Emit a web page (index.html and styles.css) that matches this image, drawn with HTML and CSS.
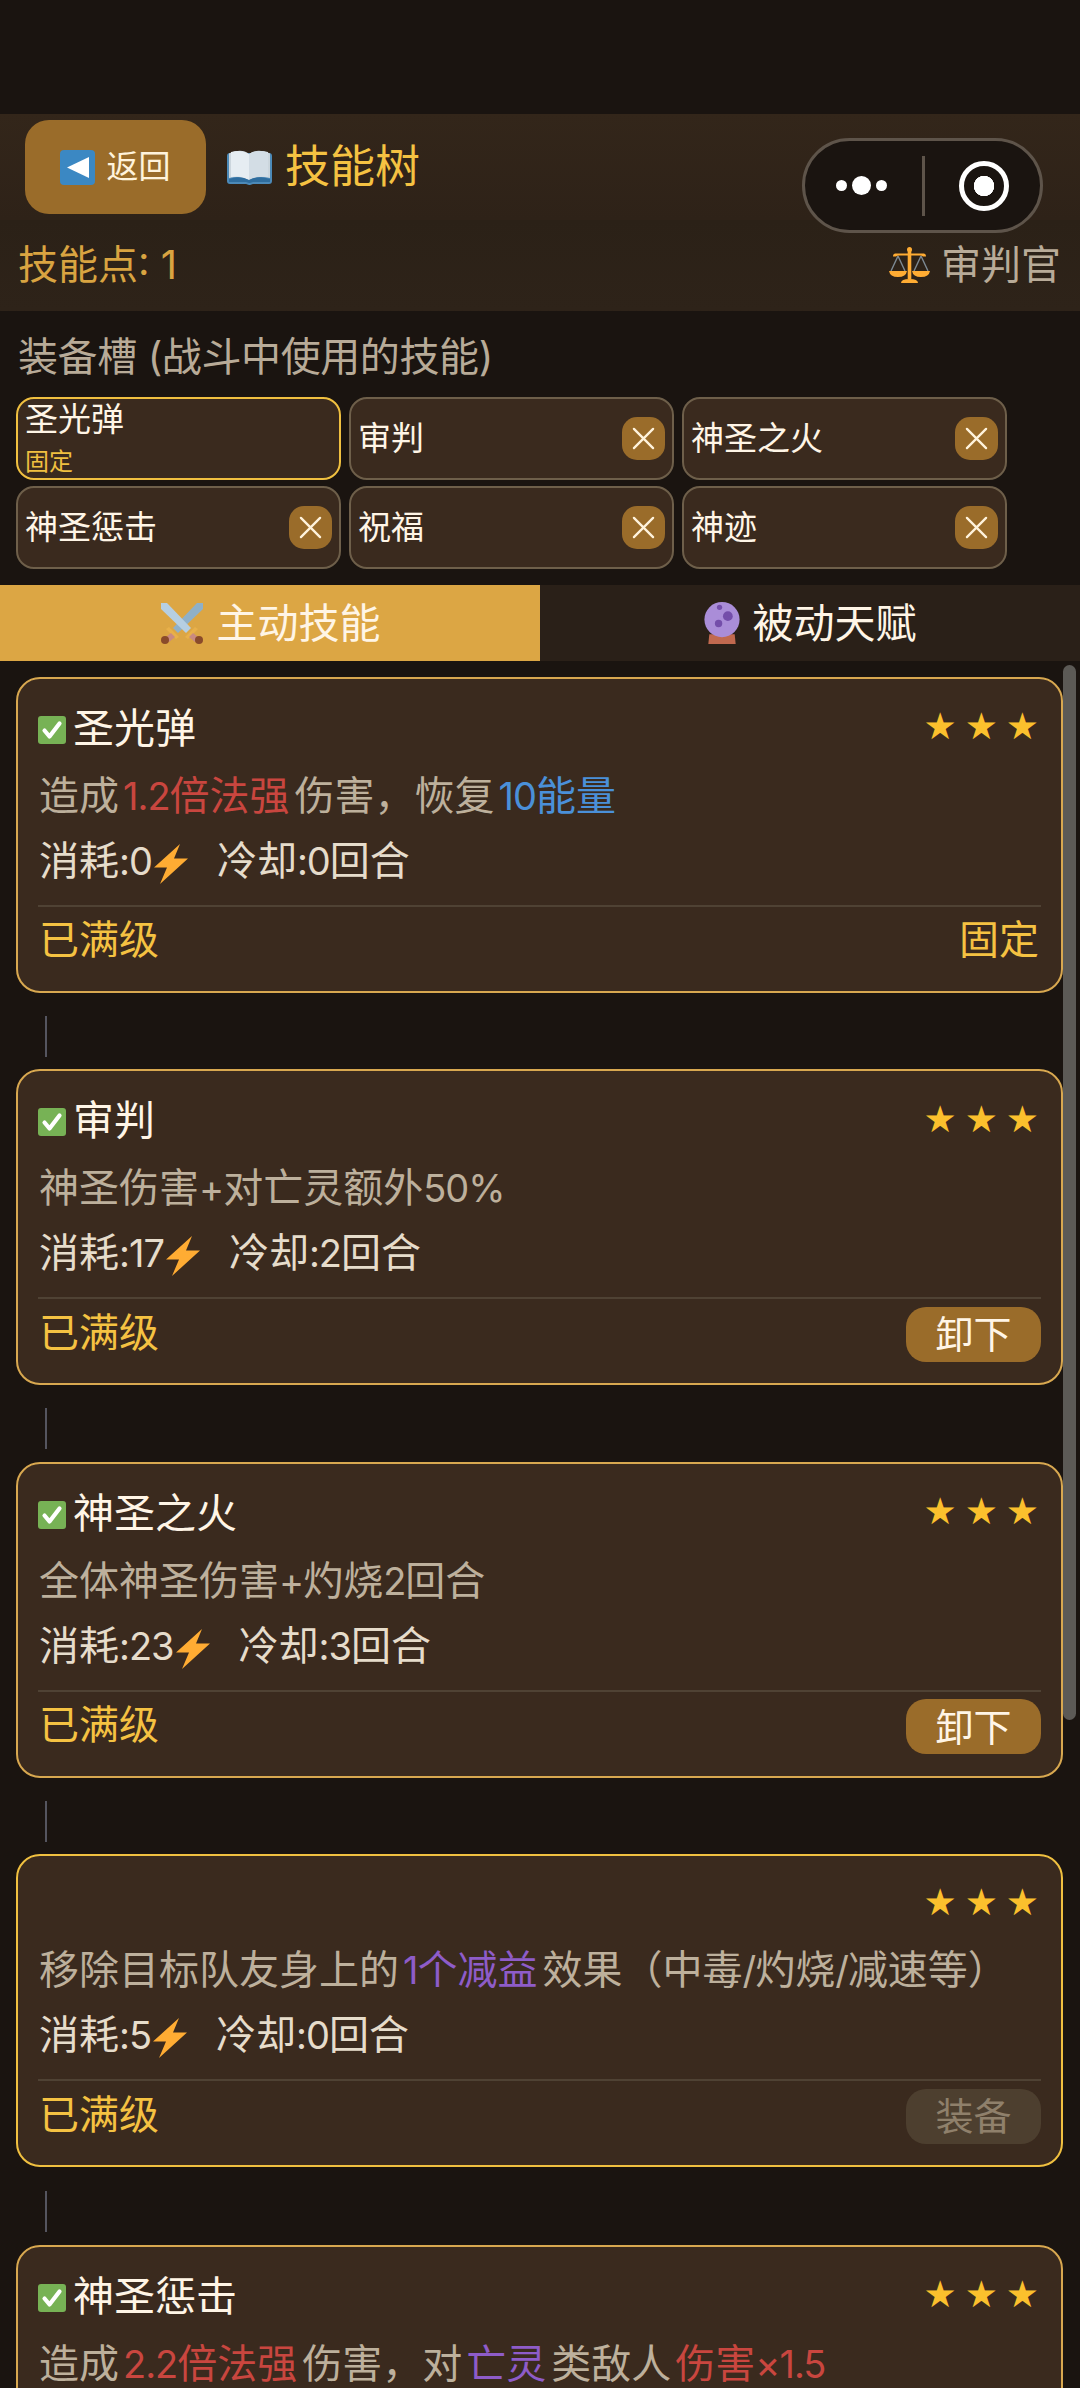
FILE: index.html
```html
<!DOCTYPE html>
<html lang="zh-CN">
<head>
<meta charset="utf-8">
<title>技能树</title>
<link rel="stylesheet" href="styles.css">
</head>
<body>
<svg class="defs" width="0" height="0" aria-hidden="true">
  <symbol id="check" viewBox="0 0 28 28">
    <rect width="28" height="28" rx="3" fill="#77b255"/>
    <path d="M6.500 14.500l5 6L21.500 7.500" fill="none" stroke="#fff" stroke-width="4.200" stroke-linecap="round" stroke-linejoin="round"/>
  </symbol>
  <symbol id="bolt" viewBox="0 0 34 40">
    <path d="M26 0L0 23.500h13L6 40 34 14.500H20z" fill="#ffac33"/>
  </symbol>
  <symbol id="x" viewBox="0 0 24 24">
    <path d="M2 2l20 20M22 2L2 22" stroke="#fff3dc" stroke-width="2.400" stroke-linecap="round"/>
  </symbol>
</svg>

<div class="status"></div>

<header class="header">
  <button class="back">
    <svg class="back-icon" viewBox="0 0 35 35"><rect width="35" height="35" rx="4" fill="#3b88c3"/><path d="M7 17.500L29 7v21z" fill="#fff"/></svg>
    <span>返回</span>
  </button>
  <svg class="book" viewBox="0 0 45 36">
    <path d="M0 7q0-3 3-3h39q3 0 3 3v25q0 3-3 3H26l-3 1h-1l-3-1H3q-3 0-3-3z" fill="#55acee" opacity=".75"/>
    <path d="M2 5q0-1 1-1 12-5 19 1 8-6 20-1 1 0 1 1v24q-12-3-21 2-9-5-20-2z" fill="#ccd6dd"/>
    <path d="M4 3q10-3 18 2v26q-8-5-18-3z" fill="#e6edf2"/>
    <path d="M41 3q-11-3-19 2v26q8-5 19-3z" fill="#d3dde5"/>
    <path d="M2 30q11-4 20 1 9-5 21-1v3H26l-3 1h-1l-3-1H2z" fill="#2f6d9e"/>
  </svg>
  <h1 class="title">技能树</h1>
</header>

<div class="capsule">
  <div class="dots"><i class="dot"></i><i class="dot big"></i><i class="dot"></i></div>
  <i class="divider"></i>
  <div class="ring"></div>
</div>

<div class="points">
  <span class="points-count">技能点: 1</span>
  <span class="role">
    <svg class="scales" viewBox="0 0 41 36">
      <path d="M9 9L2 24M9 9l7 15M32 9l-7 15M32 9l7 15" stroke="#7d8a94" stroke-width="1.400" fill="none"/>
      <path d="M0 24h18q-1 6-9 6t-9-6zM23 24h18q-1 6-9 6t-9-6z" fill="#ffac33"/>
      <rect x="18.700" y="3" width="3.600" height="29" fill="#ffac33"/>
      <circle cx="20.500" cy="2.500" r="2.500" fill="#ffac33"/>
      <path d="M6 6.500h29q2 0 2 3h-3q-1-1-3-1H10q-2 0-3 1H4q0-3 2-3z" fill="#ffac33"/>
      <path d="M12 36q0-4 8.500-4t8.500 4z" fill="#ffac33"/>
    </svg>
    <span>审判官</span>
  </span>
</div>

<section class="equip">
  <div class="equip-label">装备槽 (战斗中使用的技能)</div>
  <div class="slots">
    <div class="slot fixed"><span class="slot-name">圣光弹</span><span class="slot-sub">固定</span></div>
    <div class="slot"><span class="slot-name">审判</span><span class="slot-x"><svg class="x-icon"><use href="#x"/></svg></span></div>
    <div class="slot"><span class="slot-name">神圣之火</span><span class="slot-x"><svg class="x-icon"><use href="#x"/></svg></span></div>
    <div class="slot"><span class="slot-name">神圣惩击</span><span class="slot-x"><svg class="x-icon"><use href="#x"/></svg></span></div>
    <div class="slot"><span class="slot-name">祝福</span><span class="slot-x"><svg class="x-icon"><use href="#x"/></svg></span></div>
    <div class="slot"><span class="slot-name">神迹</span><span class="slot-x"><svg class="x-icon"><use href="#x"/></svg></span></div>
  </div>
</section>

<nav class="tabs">
  <div class="tab active">
    <svg class="tab-icon swords" viewBox="0 0 44 42">
      <path d="M37 1l6 0 0 6-25 24-5-5z" fill="#8fb0c8"/>
      <path d="M7 1L1 1l0 6 25 24 5-5z" fill="#b6cfe2"/>
      <path d="M9 25l10 10-3 2-10-10zM35 25L25 35l3 2 10-10z" fill="#e8b04a"/>
      <path d="M11 31l4 4-6 5-4-4zM33 31l-4 4 6 5 4-4z" fill="#c98a80"/>
      <circle cx="5" cy="38" r="4" fill="#8a4b2a"/>
      <circle cx="39" cy="38" r="4" fill="#8a4b2a"/>
    </svg>
    <span>主动技能</span>
  </div>
  <div class="tab">
    <svg class="tab-icon ball" viewBox="0 0 36 43">
      <path d="M4 43l1-10h26l1 10z" fill="#c1694f"/>
      <circle cx="18" cy="18" r="18" fill="#aa8dd8"/>
      <circle cx="24" cy="14.500" r="5" fill="#744eaa"/>
      <circle cx="14.500" cy="22" r="3.800" fill="#744eaa"/>
      <circle cx="15.500" cy="5.500" r="2.700" fill="#744eaa"/>
    </svg>
    <span>被动天赋</span>
  </div>
</nav>

<main class="list">
  <article class="card">
    <div class="card-top">
      <div class="card-name"><svg class="check"><use href="#check"/></svg><span>圣光弹</span></div>
      <div class="stars">★★★</div>
    </div>
    <p class="desc">造成<span class="hl red"><span class="num">1.2</span>倍法强</span>伤害，恢复<span class="hl blue"><span class="num">10</span>能量</span></p>
    <p class="stats"><span class="stat">消耗<span class="num">:0</span><svg class="bolt"><use href="#bolt"/></svg></span><span>冷却<span class="num">:0</span>回合</span></p>
    <div class="card-foot"><span class="level">已满级</span><span class="level">固定</span></div>
  </article>
  <div class="link"></div>
  <article class="card">
    <div class="card-top">
      <div class="card-name"><svg class="check"><use href="#check"/></svg><span>审判</span></div>
      <div class="stars">★★★</div>
    </div>
    <p class="desc">神圣伤害<span class="num">+</span>对亡灵额外<span class="num">50%</span></p>
    <p class="stats"><span class="stat">消耗<span class="num">:17</span><svg class="bolt"><use href="#bolt"/></svg></span><span>冷却<span class="num">:2</span>回合</span></p>
    <div class="card-foot"><span class="level">已满级</span><button class="action">卸下</button></div>
  </article>
  <div class="link"></div>
  <article class="card">
    <div class="card-top">
      <div class="card-name"><svg class="check"><use href="#check"/></svg><span>神圣之火</span></div>
      <div class="stars">★★★</div>
    </div>
    <p class="desc">全体神圣伤害<span class="num">+</span>灼烧<span class="num">2</span>回合</p>
    <p class="stats"><span class="stat">消耗<span class="num">:23</span><svg class="bolt"><use href="#bolt"/></svg></span><span>冷却<span class="num">:3</span>回合</span></p>
    <div class="card-foot"><span class="level">已满级</span><button class="action">卸下</button></div>
  </article>
  <div class="link"></div>
  <article class="card bright">
    <div class="card-top short">
      <div class="card-name"></div>
      <div class="stars">★★★</div>
    </div>
    <p class="desc">移除目标队友身上的<span class="hl purple"><span class="num">1</span>个减益</span>效果（中毒<span class="num">/</span>灼烧<span class="num">/</span>减速等）</p>
    <p class="stats"><span class="stat">消耗<span class="num">:5</span><svg class="bolt"><use href="#bolt"/></svg></span><span>冷却<span class="num">:0</span>回合</span></p>
    <div class="card-foot"><span class="level">已满级</span><button class="action off">装备</button></div>
  </article>
  <div class="link"></div>
  <article class="card">
    <div class="card-top">
      <div class="card-name"><svg class="check"><use href="#check"/></svg><span>神圣惩击</span></div>
      <div class="stars">★★★</div>
    </div>
    <p class="desc">造成<span class="hl red"><span class="num">2.2</span>倍法强</span>伤害，对<span class="hl purple">亡灵</span>类敌人<span class="hl red">伤害<span class="num">×1.5</span></span></p>
  </article>
</main>

<div class="scrollbar"></div>
</body>
</html>
```

FILE: styles.css
```css
* { box-sizing: border-box; }

html, body {
  margin: 0;
  height: 2388px;
  overflow: hidden;
}

body {
  position: relative;
  background: #1a1410;
  color: #fff5e6;
  font-family: Inter, "Noto Sans CJK SC", sans-serif;
}

.defs { position: absolute; }

.status { height: 114px; }

.header {
  display: flex;
  align-items: center;
  height: 106px;
  padding-left: 25px;
  background: linear-gradient(#33261a, #2e2218);
}

.back {
  display: flex;
  align-items: center;
  justify-content: center;
  gap: 11px;
  width: 181px;
  height: 94px;
  padding: 0;
  border: 0;
  border-radius: 24px;
  background: #9a6c2a;
  color: #fff3dc;
  font: inherit;
  font-size: 32px;
  line-height: 46px;
}

.back-icon { width: 35px; height: 35px; }

.book { width: 45px; height: 36px; margin-left: 21px; }

.title {
  margin: 0 0 1px 13px;
  font-size: 45px;
  font-weight: 400;
  line-height: 60px;
  color: #f5c242;
}

.capsule {
  position: absolute;
  top: 138px;
  left: 802px;
  width: 241px;
  height: 95px;
  display: flex;
  align-items: center;
  border: 3px solid #5e544a;
  border-radius: 48px;
  background: #1a1410;
}

.dots {
  display: flex;
  align-items: center;
  gap: 5px;
  width: 86px;
  margin-left: 31px;
}

.dot { width: 11px; height: 11px; border-radius: 50%; background: #fff; }
.dot.big { width: 19px; height: 19px; }

.divider { width: 3px; height: 60px; background: #5e544a; }

.ring {
  width: 50px;
  height: 50px;
  margin-left: 34px;
  border: 5px solid #fff;
  border-radius: 50%;
  background: radial-gradient(circle, #fff 0 10px, transparent 10.5px);
}

.points {
  display: flex;
  align-items: center;
  justify-content: space-between;
  height: 91px;
  padding: 0 19px 2px 18px;
  background: linear-gradient(#2b2117, #2e2319);
  font-size: 40px;
  line-height: 56px;
}

.points-count { color: #d9a441; }

.role { display: flex; align-items: center; gap: 11px; color: #b8ab98; }

.scales { width: 41px; height: 36px; }

.equip { padding: 24px 0 16px 16px; }

.equip-label {
  padding-left: 2px;
  font-size: 40px;
  line-height: 44px;
  letter-spacing: -0.4px;
  color: #b8ab98;
}

.slots {
  display: grid;
  grid-template-columns: repeat(3, 325px);
  grid-auto-rows: 83px;
  gap: 6px 8px;
  margin-top: 18px;
}

.slot {
  display: flex;
  align-items: center;
  justify-content: space-between;
  padding: 0 7px;
  border: 2px solid #6e5f4a;
  border-radius: 18px;
  background: #3a2a1e;
}

.slot.fixed {
  flex-direction: column;
  align-items: flex-start;
  justify-content: flex-start;
  border-color: #f0c040;
}

.slot-name { margin-bottom: 2px; font-size: 33px; line-height: 40px; }

.slot-sub {
  margin-top: 6px;
  font-size: 24px;
  line-height: 30px;
  color: #f0c040;
}

.slot-x {
  display: flex;
  align-items: center;
  justify-content: center;
  width: 43px;
  height: 43px;
  border-radius: 15px;
  background: #9a6c2a;
}

.x-icon { width: 23px; height: 23px; }

.tabs {
  display: grid;
  grid-template-columns: 1fr 1fr;
  height: 76px;
  background: #2a2018;
}

.tab {
  display: flex;
  align-items: center;
  justify-content: center;
  gap: 13px;
  font-size: 41px;
  line-height: 58px;
}

.tab.active { background: #dca644; }

.tab-icon { width: 44px; height: 42px; }
.tab-icon.ball { width: 36px; }

.list { padding: 15.6px 17px 0 16px; }

.card {
  height: 316px;
  padding: 21px 20px 0;
  border: 2px solid #d8a850;
  border-radius: 24px;
  background: #3a2a1e;
}

.card.bright { height: 313px; border-color: #f0c040; }
.card.bright + .link { margin-top: 24px; }

.card-top {
  display: flex;
  align-items: center;
  justify-content: space-between;
  height: 56px;
}

.card-top.short { height: 53px; }

.card-name {
  display: flex;
  align-items: center;
  gap: 7px;
  font-size: 41px;
  line-height: 56px;
}

.check { width: 28px; height: 28px; margin-top: 4px; }

.stars {
  margin: 0 -8px 2px 0;
  padding-right: 2px;
  font-family: "DejaVu Sans", sans-serif;
  font-size: 37px;
  line-height: 1;
  letter-spacing: 8px;
  color: #fbc02d;
}

.desc {
  margin: 14px 0 0 1px;
  font-size: 40px;
  line-height: 52px;
  color: #bdb09c;
  white-space: nowrap;
}

.hl { margin: 0 5px 0 4px; }

.num { font-size: 38px; letter-spacing: -1px; }

.red { color: #c9463f; }
.blue { color: #4a90d9; }
.purple { color: #8e5cc9; }

.stats {
  display: flex;
  margin: 13px 0 0 1px;
  font-size: 40px;
  line-height: 52px;
  color: #e6dccb;
}

.stat { margin-right: 29px; }

.bolt { width: 34px; height: 40px; margin-left: 2px; vertical-align: -9px; }

.card-foot {
  display: flex;
  align-items: center;
  justify-content: space-between;
  height: 64px;
  margin-top: 18px;
  padding-top: 8px;
  border-top: 2px solid #4f4234;
}

.level {
  margin-bottom: 3px;
  padding: 0 2px 0 1px;
  font-size: 40px;
  line-height: 52px;
  color: #f5c242;
}

.action {
  width: 135px;
  height: 55px;
  padding: 0;
  border: 0;
  border-radius: 20px;
  background: #9a6c2a;
  color: #fff5e6;
  font: inherit;
  font-size: 38px;
  line-height: 50px;
}

.action.off { background: #4d3f2f; color: #8f806b; }

.link {
  width: 2px;
  height: 41px;
  margin: 23px 0 12.6px 29px;
  background: #55555f;
}

.scrollbar {
  position: absolute;
  top: 665px;
  left: 1063px;
  width: 13px;
  height: 1055px;
  border-radius: 7px;
  background: #5c5a56;
}
```
